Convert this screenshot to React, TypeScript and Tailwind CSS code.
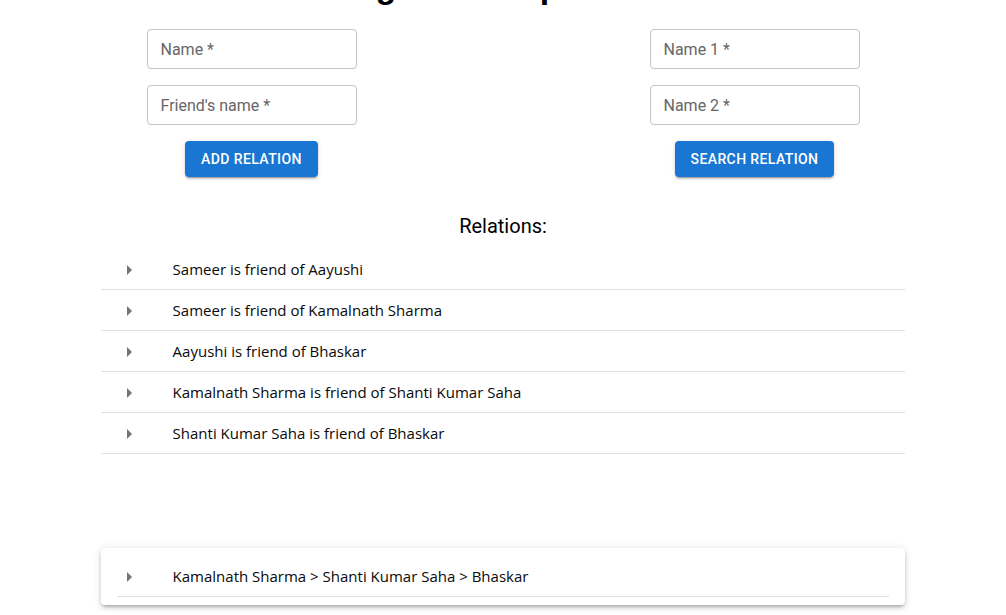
import React from "react";

const relations = [
  "Sameer is friend of Aayushi",
  "Sameer is friend of Kamalnath Sharma",
  "Aayushi is friend of Bhaskar",
  "Kamalnath Sharma is friend of Shanti Kumar Saha",
  "Shanti Kumar Saha is friend of Bhaskar",
];

const ArrowRight = () => (
  <svg viewBox="0 0 24 24" className="w-6 h-6 fill-[#757575]" aria-hidden="true">
    <path d="m10 17 5-5-5-5v10z" />
  </svg>
);

const Field = ({ label }: { label: string }) => (
  <div className="w-[210px] h-10 rounded border border-[#c4c4c4] flex items-center px-[13px] pt-px text-base text-[#666666]">
    {label}
  </div>
);

const Btn = ({ children }: { children: React.ReactNode }) => (
  <button className="h-9 px-4 rounded bg-[#1976d2] text-white text-sm font-medium uppercase tracking-[0.4px] shadow-[0px_3px_1px_-2px_rgba(0,0,0,0.2),0px_2px_2px_0px_rgba(0,0,0,0.14),0px_1px_5px_0px_rgba(0,0,0,0.12)]">
    {children}
  </button>
);

const Row = ({ text, inset }: { text: string; inset?: boolean }) => (
  <div className={inset ? "flex items-center h-[41px] pt-px border-b border-[#e0e0e0] pl-4" : "flex items-center h-[41px] pt-px border-b border-[#e0e0e0]"}>
    <div className="w-14 shrink-0 flex">
      <ArrowRight />
    </div>
    <span className="font-['Open_Sans',sans-serif] text-[15px] text-[#0a0a0a]">{text}</span>
  </div>
);

export default function App() {
  return (
    <div className="min-h-[615px] bg-white font-['Roboto',sans-serif] overflow-hidden">
      <h1 className="-mt-[34px] mb-[23px] h-10 leading-[40px] text-center text-[34px] font-bold font-['Liberation_Sans',sans-serif] text-black">
        Degree of Separation
      </h1>

      <div className="grid grid-cols-2">
        <div className="flex flex-col items-center gap-4">
          <Field label="Name *" />
          <Field label="Friend's name *" />
          <Btn>Add Relation</Btn>
        </div>
        <div className="flex flex-col items-center gap-4">
          <Field label="Name 1 *" />
          <Field label="Name 2 *" />
          <Btn>Search Relation</Btn>
        </div>
      </div>

      <h2 className="mt-[35px] mb-[9px] text-center text-xl leading-7 text-black">Relations:</h2>

      <div className="w-4/5 mx-auto">
        {relations.map((r) => (
          <Row key={r} text={r} inset />
        ))}
      </div>

      <div className="w-4/5 mx-auto mt-[94px] rounded bg-white px-4 py-2 shadow-[0px_3px_3px_-2px_rgba(0,0,0,0.2),0px_3px_4px_0px_rgba(0,0,0,0.14),0px_1px_8px_0px_rgba(0,0,0,0.12)]">
        <Row text="Kamalnath Sharma > Shanti Kumar Saha > Bhaskar" />
      </div>
    </div>
  );
}
